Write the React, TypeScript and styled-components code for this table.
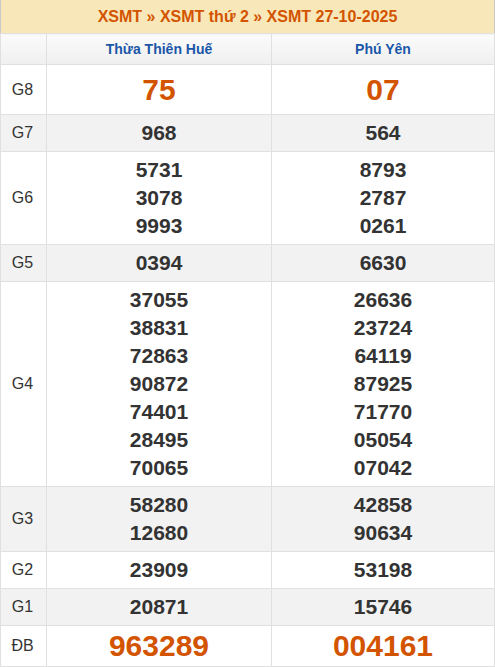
import React from "react";
import styled, { createGlobalStyle } from "styled-components";

const Global = createGlobalStyle`
  html, body { margin: 0; padding: 0; background: #fff; }
  body { font-family: "Liberation Sans", Arial, sans-serif; }
`;

const Table = styled.table`
  width: 495px;
  border-collapse: collapse;
  table-layout: fixed;
  border-left: 1px solid #c8c8c8;
  border-right: 1px solid #c8c8c8;
  border-bottom: 1px solid #c8c8c8;
`;

const TitleCell = styled.th`
  height: 33px;
  padding: 0;
  background: #f8e8b9;
  color: #d35400;
  font-size: 16px;
  font-weight: bold;
  line-height: 33px;
  text-align: center;
  border-bottom: 1px solid #e0e0e0;
`;

const ProvinceCell = styled.th`
  height: 30px;
  padding: 0;
  background: linear-gradient(#fbfbfb, #efefef);
  color: #1a56a8;
  font-size: 14px;
  font-weight: bold;
  text-align: center;
  border: 1px solid #e0e0e0;
  border-top: none;
`;

const Row = styled.tr<{ $alt: boolean }>`
  background: ${(p) => (p.$alt ? "#f2f2f2" : "#ffffff")};
`;

const Label = styled.td`
  padding: 0 2px 0 0;
  text-align: center;
  vertical-align: middle;
  font-size: 16px;
  color: #333;
  border: 1px solid #e0e0e0;
`;

const Numbers = styled.td<{ $big: boolean; $line: number }>`
  padding: 4px 0;
  text-align: center;
  vertical-align: middle;
  border: 1px solid #e0e0e0;
  font-weight: bold;
  font-size: ${(p) => (p.$big ? "30px" : "21px")};
  line-height: ${(p) => p.$line}px;
  color: ${(p) => (p.$big ? "#d35400" : "#333")};
`;

const Num = styled.div``;

type Prize = { label: string; a: string[]; b: string[]; big?: boolean; line?: number };

const prizes: Prize[] = [
  { label: "G8", a: ["75"], b: ["07"], big: true, line: 41 },
  { label: "G7", a: ["968"], b: ["564"] },
  { label: "G6", a: ["5731", "3078", "9993"], b: ["8793", "2787", "0261"] },
  { label: "G5", a: ["0394"], b: ["6630"] },
  {
    label: "G4",
    a: ["37055", "38831", "72863", "90872", "74401", "28495", "70065"],
    b: ["26636", "23724", "64119", "87925", "71770", "05054", "07042"],
  },
  { label: "G3", a: ["58280", "12680"], b: ["42858", "90634"] },
  { label: "G2", a: ["23909"], b: ["53198"] },
  { label: "G1", a: ["20871"], b: ["15746"] },
  { label: "ĐB", a: ["963289"], b: ["004161"], big: true, line: 32 },
];

export default function App() {
  return (
    <>
      <Global />
      <Table>
        <colgroup>
          <col style={{ width: 46 }} />
          <col style={{ width: 225 }} />
          <col />
        </colgroup>
        <thead>
          <tr>
            <TitleCell colSpan={3}>XSMT » XSMT thứ 2 » XSMT 27-10-2025</TitleCell>
          </tr>
          <tr>
            <ProvinceCell />
            <ProvinceCell>Thừa Thiên Huế</ProvinceCell>
            <ProvinceCell>Phú Yên</ProvinceCell>
          </tr>
        </thead>
        <tbody>
          {prizes.map((p, i) => (
            <Row key={p.label} $alt={i % 2 === 1}>
              <Label>{p.label}</Label>
              <Numbers $big={!!p.big} $line={p.line ?? 28}>
                {p.a.map((n, j) => (
                  <Num key={j}>{n}</Num>
                ))}
              </Numbers>
              <Numbers $big={!!p.big} $line={p.line ?? 28}>
                {p.b.map((n, j) => (
                  <Num key={j}>{n}</Num>
                ))}
              </Numbers>
            </Row>
          ))}
        </tbody>
      </Table>
    </>
  );
}
